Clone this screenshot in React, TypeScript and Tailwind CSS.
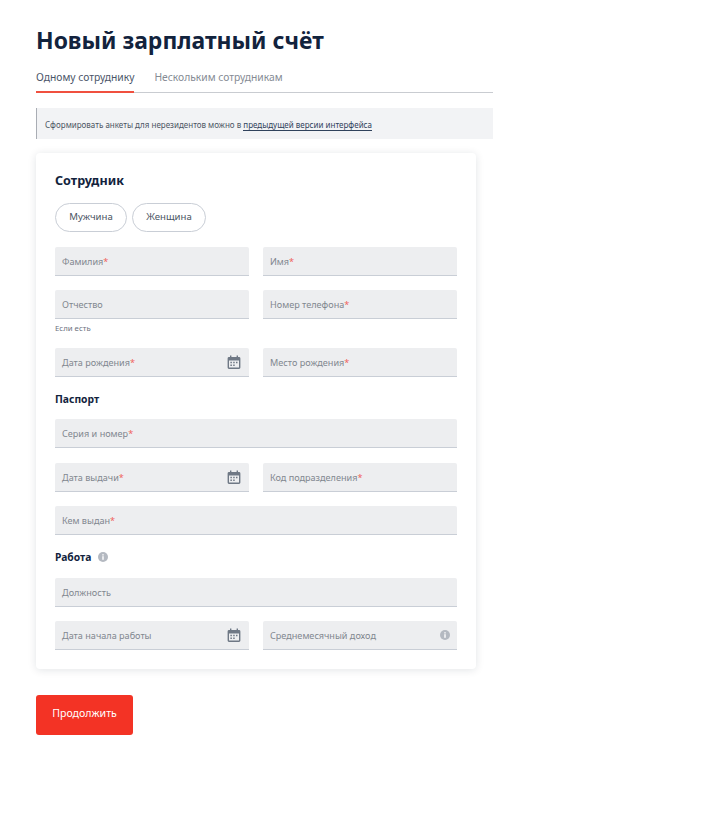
const font = { fontFamily: '"Noto Sans", sans-serif' };

function CalendarIcon() {
    return (
        <svg width="14" height="15" viewBox="0 0 14 15" className="shrink-0">
            <path fill="#6f7885" d="M3 0.5h1.4v1.5h5.2V0.5H11v1.5h1a1.4 1.4 0 0 1 1.4 1.4v9.2a1.4 1.4 0 0 1-1.4 1.4H2a1.4 1.4 0 0 1-1.4-1.4V3.4A1.4 1.4 0 0 1 2 2h1zM2 5.6v7h10v-7z" />
            <path fill="#6f7885" d="M3.4 6.8h1.5v1.4H3.4zM6.2 6.8h1.5v1.4H6.2zM9 6.8h1.5v1.4H9zM3.4 9.6h1.5V11H3.4zM6.2 9.6h1.5V11H6.2z" />
        </svg>
    );
}

function InfoIcon() {
    return (
        <svg width="10" height="10" viewBox="0 0 10 10" className="shrink-0">
            <circle cx="5" cy="5" r="5" fill="#b4b9c1" />
            <rect x="4.3" y="4.2" width="1.4" height="3.6" fill="#fff" />
            <rect x="4.3" y="2.2" width="1.4" height="1.3" fill="#fff" />
        </svg>
    );
}

function Field({ label, required, icon, className = '' }: { label: string; required?: boolean; icon?: 'calendar' | 'info'; className?: string }) {
    return (
        <div className={`flex h-[29px] items-center justify-between rounded-t-[2px] border-b border-[#c9ced6] bg-[#edeef0] pl-[7px] pr-2 ${className}`}>
            <span className="pt-px text-[9.1px] text-[#81878f]">
                {label}
                {required && <span className="text-[#f0605a]">*</span>}
            </span>
            {icon === 'calendar' && <CalendarIcon />}
            {icon === 'info' && <span className="-mr-px"><InfoIcon /></span>}
        </div>
    );
}

export default function App() {
    return (
        <div style={font} className="min-h-[814px] bg-white pl-9 pt-[25px]">
            <h1 className="h-8 text-[22.9px] leading-8 font-bold text-[#12233d]">Новый зарплатный счёт</h1>

            <div className="mt-[10px] flex h-[26px] w-[457px] gap-5 border-b border-[#c9ccd1] text-[10.3px]">
                <span className="-mb-px h-[26px] border-b-2 border-[#f0503f] leading-[20px] text-[#4a5568]">Одному сотруднику</span>
                <span className="leading-[20px] text-[#858b94]">Нескольким сотрудникам</span>
            </div>

            <div className="mt-[15px] flex h-[31px] w-[457px] items-center border-l border-[#a9adb4] bg-[#f2f3f5] pl-2 pt-[2px] text-[8px] text-[#4b5563]">
                <span>
                    Сформировать анкеты для нерезидентов можно в{' '}
                    <span className="border-b border-[#30425c] text-[#30425c]">предыдущей версии интерфейса</span>
                </span>
            </div>

            <div className="mt-[14px] h-[516px] w-[440px] rounded-[4px] bg-white px-[19px] pt-[18px] shadow-[0_1px_8px_rgba(20,30,50,0.12)]">
                <h2 className="h-[20px] text-[12.6px] leading-[20px] font-bold text-[#12233d]">Сотрудник</h2>

                <div className="mt-[12px] flex gap-[5px] text-[9.6px] text-[#4b5563]">
                    <span className="flex h-[29px] w-[72px] items-center justify-center rounded-full border border-[#c9ced6]">Мужчина</span>
                    <span className="flex h-[29px] w-[74px] items-center justify-center rounded-full border border-[#c9ced6]">Женщина</span>
                </div>

                <div className="mt-[15px] grid grid-cols-2 gap-x-[14px]">
                    <Field label="Фамилия" required />
                    <Field label="Имя" required />
                </div>

                <div className="mt-[14px] grid grid-cols-2 gap-x-[14px]">
                    <div>
                        <Field label="Отчество" />
                        <p className="mt-[4px] h-[10px] text-[7.8px] leading-[10px] text-[#6b7280]">Если есть</p>
                    </div>
                    <Field label="Номер телефона" required />
                </div>

                <div className="mt-[15px] grid grid-cols-2 gap-x-[14px]">
                    <Field label="Дата рождения" required icon="calendar" />
                    <Field label="Место рождения" required />
                </div>

                <h3 className="mt-[14px] h-[16px] text-[10.3px] leading-[16px] font-bold text-[#12233d]">Паспорт</h3>

                <Field label="Серия и номер" required className="mt-[12px]" />

                <div className="mt-[15px] grid grid-cols-2 gap-x-[14px]">
                    <Field label="Дата выдачи" required icon="calendar" />
                    <Field label="Код подразделения" required />
                </div>

                <Field label="Кем выдан" required className="mt-[14px]" />

                <div className="mt-[14px] flex h-[16px] items-center gap-[7px]">
                    <h3 className="text-[10.3px] leading-[16px] font-bold text-[#12233d]">Работа</h3>
                    <InfoIcon />
                </div>

                <Field label="Должность" className="mt-[13px]" />

                <div className="mt-[14px] grid grid-cols-2 gap-x-[14px]">
                    <Field label="Дата начала работы" icon="calendar" />
                    <Field label="Среднемесячный доход" icon="info" />
                </div>
            </div>

            <button className="mt-[26px] flex h-10 w-[97px] items-center justify-center rounded-[3px] bg-[#f33325] pb-[2px] text-[10.6px] text-white">
                Продолжить
            </button>
        </div>
    );
}
